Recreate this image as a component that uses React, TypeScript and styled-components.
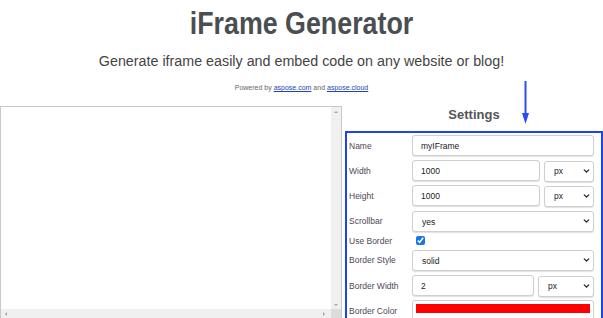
import React from "react";
import styled, { createGlobalStyle } from "styled-components";
import { ChevronDown } from "lucide-react";

const Global = createGlobalStyle`
  html, body { margin: 0; padding: 0; background: #fff; }
  body { font-family: "Liberation Sans", Arial, sans-serif; overflow: hidden; }
  * { box-sizing: border-box; }
`;

const Page = styled.div`
  position: relative;
  width: 603px;
  height: 318px;
  overflow: hidden;
`;

const Header = styled.header`
  display: flex;
  flex-direction: column;
  align-items: center;
  padding-top: 8px;
`;

const Title = styled.h1`
  margin: 0;
  font-size: 26.8px;
  line-height: 32px;
  font-weight: bold;
  color: #4a4e53;
  transform: scaleY(1.15);
`;

const Subtitle = styled.p`
  margin: 12px 0 0;
  font-size: 14.3px;
  line-height: 18px;
  color: #444;
  transform: scaleY(1.08);
`;

const Powered = styled.p`
  margin: 13px 0 0;
  font-size: 7px;
  line-height: 9px;
  color: #666;
  a { color: #2046b4; text-decoration: underline; }
`;

const Main = styled.main`
  display: flex;
  gap: 3px;
  margin-top: 14px;
`;

const Preview = styled.div`
  width: 342px;
  height: 214px;
  flex: none;
  border: 1px solid #c8c8c8;
  display: grid;
  grid-template-columns: 1fr 10px;
  grid-template-rows: 1fr 10px;
  background: #fff;
`;

const Canvas = styled.div`
  background: #fff;
`;

const VTrack = styled.div`
  background: #f0f0f0;
  display: flex;
  flex-direction: column;
  justify-content: space-between;
  align-items: center;
  padding: 4px 0 3px;
`;

const HTrack = styled.div`
  background: #f0f0f0;
  display: flex;
  justify-content: space-between;
  align-items: center;
  padding: 0 6px 0 4px;
`;

const Corner = styled.div`
  background: #dcdcdc;
`;

const Tri = styled.span<{ $dir: "up" | "down" | "left" | "right" }>`
  width: 0;
  height: 0;
  border: 2px solid transparent;
  ${(p) =>
    p.$dir === "up"
      ? "border-bottom: 2px solid #a3a3a3; border-top-width: 0;"
      : p.$dir === "down"
      ? "border-top: 2px solid #a3a3a3; border-bottom-width: 0;"
      : p.$dir === "left"
      ? "border-right: 2px solid #a3a3a3; border-left-width: 0;"
      : "border-left: 2px solid #a3a3a3; border-right-width: 0;"}
`;

const SettingsCol = styled.section`
  width: 258px;
  flex: none;
  display: flex;
  flex-direction: column;
`;

const SettingsTitle = styled.h2`
  margin: 0;
  height: 25px;
  font-size: 13px;
  line-height: 17px;
  font-weight: bold;
  color: #555;
  text-align: center;
`;

const Box = styled.div`
  border: 2px solid #1b44f5;
  border-bottom: none;
  padding: 2px 7px 10px 2px;
  display: flex;
  flex-direction: column;
  gap: 4.2px;
`;

const Row = styled.div<{ $h?: number }>`
  display: grid;
  grid-template-columns: 63px 1fr;
  align-items: center;
  height: ${(p) => p.$h ?? 21}px;
`;

const Label = styled.label`
  font-size: 8.5px;
  color: #4f4655;
  padding-left: 0;
`;

const Pair = styled.div<{ $sel: number }>`
  display: grid;
  grid-template-columns: 1fr ${(p) => p.$sel}px;
  gap: 4px;
  height: 100%;
`;

const Input = styled.input`
  height: 100%;
  width: 100%;
  border: 1px solid #cfcfcf;
  border-radius: 3px;
  box-shadow: 0 1px 1px rgba(0, 0, 0, 0.12);
  padding: 0 0 0 8px;
  font-family: "Liberation Sans", Arial, sans-serif;
  font-size: 8.5px;
  color: #222;
  outline: none;
  background: #fff;
`;

const ColorField = styled.div`
  height: 100%;
  border: 1px solid #cfcfcf;
  border-radius: 3px;
  padding: 3px 3px 0;
  background: #fff;
`;

const Swatch = styled.div`
  height: 9px;
  background: #ff0000;
`;

const SelectWrap = styled.div`
  position: relative;
  height: 100%;
`;

const Select = styled.select`
  appearance: none;
  height: 100%;
  width: 100%;
  border: 1px solid #cfcfcf;
  border-radius: 3px;
  box-shadow: 0 1px 1px rgba(0, 0, 0, 0.12);
  padding: 0 0 0 9px;
  font-family: "Liberation Sans", Arial, sans-serif;
  font-size: 8.5px;
  color: #222;
  background: #fff;
  outline: none;
`;

const Chevron = styled(ChevronDown)`
  position: absolute;
  right: 3px;
  top: 50%;
  transform: translateY(-50%);
  pointer-events: none;
`;

const Check = styled.input`
  margin: 0 0 0 4px;
  width: 9px;
  height: 9px;
  accent-color: #1a73e8;
`;

const Arrow = styled.svg`
  position: absolute;
  left: 521px;
  top: 81px;
`;

function Dropdown({ value, options }: { value: string; options: string[] }) {
  return (
    <SelectWrap>
      <Select defaultValue={value}>
        {options.map((o) => (
          <option key={o}>{o}</option>
        ))}
      </Select>
      <Chevron size={9} strokeWidth={3.5} color="#222" />
    </SelectWrap>
  );
}

export default function App() {
  return (
    <Page>
      <Global />
      <Header>
        <Title>iFrame Generator</Title>
        <Subtitle>Generate iframe easily and embed code on any website or blog!</Subtitle>
        <Powered>
          Powered by <a href="#">aspose.com</a> and <a href="#">aspose.cloud</a>
        </Powered>
      </Header>
      <Main>
        <Preview>
          <Canvas />
          <VTrack>
            <Tri $dir="up" />
            <Tri $dir="down" />
          </VTrack>
          <HTrack>
            <Tri $dir="left" />
            <Tri $dir="right" />
          </HTrack>
          <Corner />
        </Preview>
        <SettingsCol>
          <SettingsTitle>Settings</SettingsTitle>
          <Box>
            <Row>
              <Label>Name</Label>
              <Input defaultValue="myIFrame" />
            </Row>
            <Row>
              <Label>Width</Label>
              <Pair $sel={50}>
                <Input defaultValue="1000" />
                <Dropdown value="px" options={["px", "%"]} />
              </Pair>
            </Row>
            <Row>
              <Label>Height</Label>
              <Pair $sel={50}>
                <Input defaultValue="1000" />
                <Dropdown value="px" options={["px", "%"]} />
              </Pair>
            </Row>
            <Row>
              <Label>Scrollbar</Label>
              <Dropdown value="yes" options={["yes", "no", "auto"]} />
            </Row>
            <Row $h={10}>
              <Label>Use Border</Label>
              <Check type="checkbox" defaultChecked />
            </Row>
            <Row>
              <Label>Border Style</Label>
              <Dropdown value="solid" options={["solid", "dashed", "dotted"]} />
            </Row>
            <Row>
              <Label>Border Width</Label>
              <Pair $sel={56}>
                <Input defaultValue="2" />
                <Dropdown value="px" options={["px", "em"]} />
              </Pair>
            </Row>
            <Row>
              <Label>Border Color</Label>
              <ColorField>
                <Swatch />
              </ColorField>
            </Row>
          </Box>
        </SettingsCol>
      </Main>
      <Arrow width="9" height="44" viewBox="0 0 9 44">
        <line x1="4.5" y1="0" x2="4.5" y2="34" stroke="#2a4cf2" strokeWidth="2" />
        <path d="M1 32 L8 32 L4.5 43 Z" fill="#2a4cf2" />
      </Arrow>
    </Page>
  );
}
